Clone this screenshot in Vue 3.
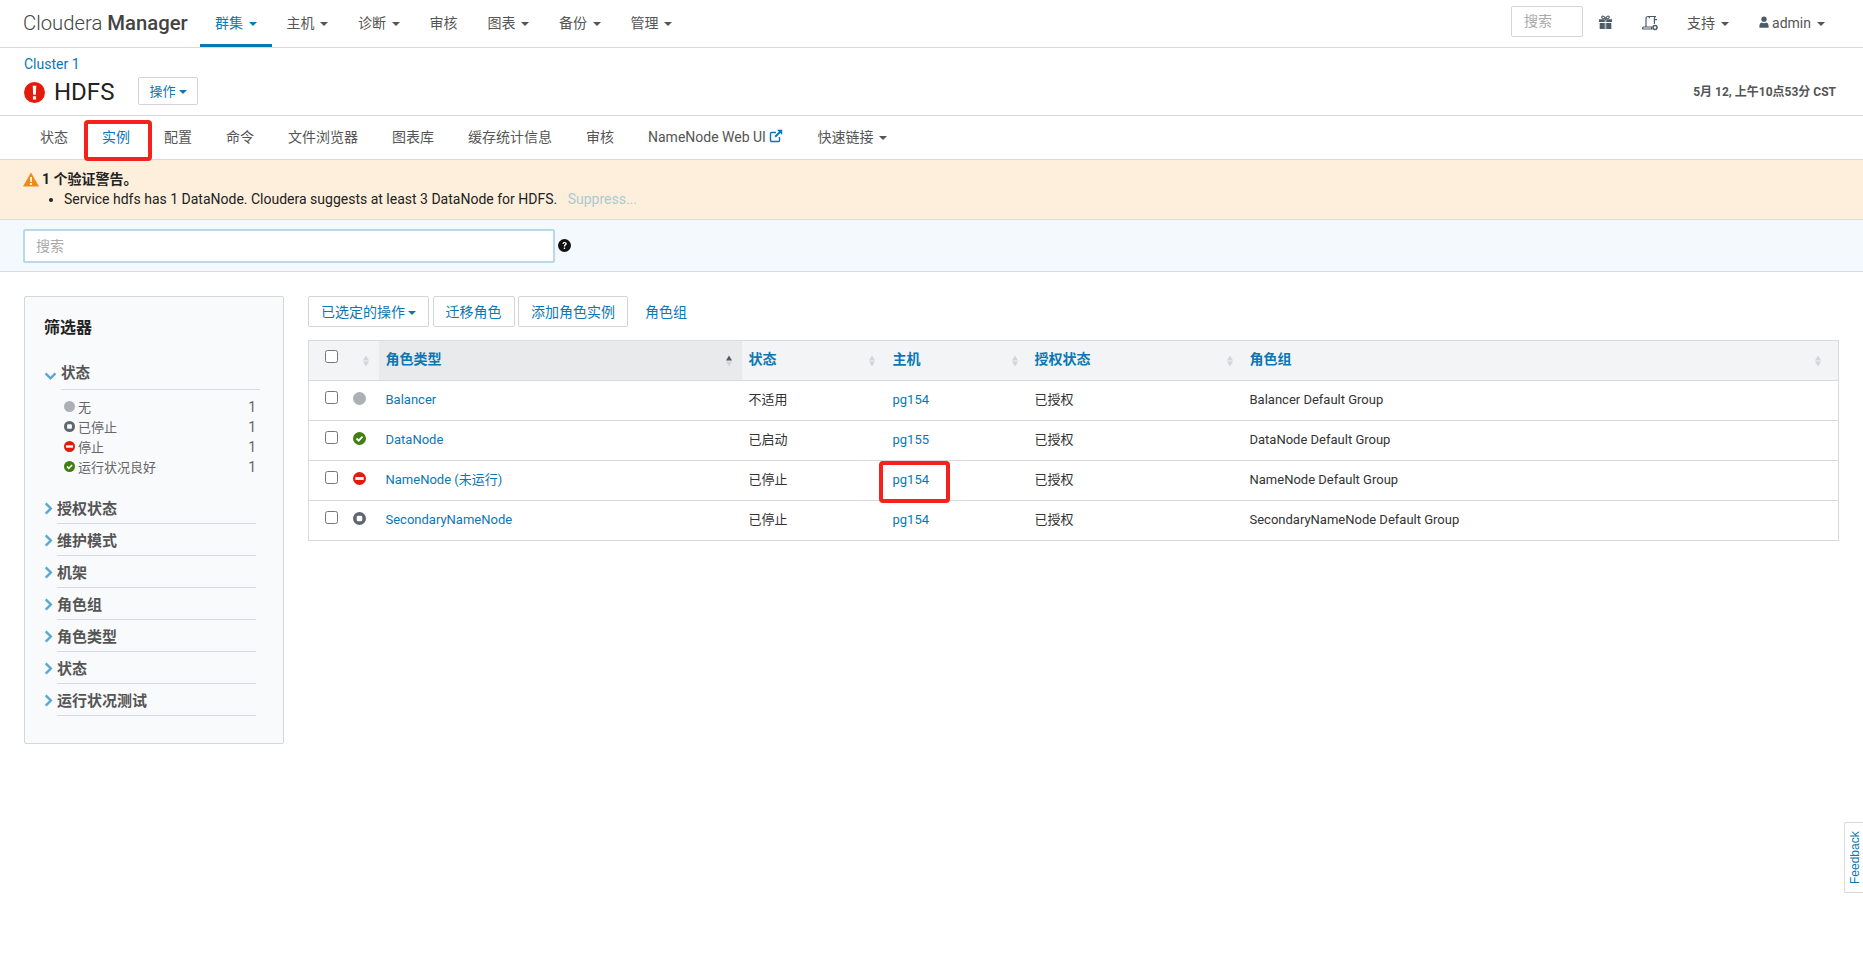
<script setup>
const navItems = [
  { label: '群集', caret: true, active: true },
  { label: '主机', caret: true },
  { label: '诊断', caret: true },
  { label: '审核' },
  { label: '图表', caret: true },
  { label: '备份', caret: true },
  { label: '管理', caret: true },
]

const tabs = ['状态', '实例', '配置', '命令', '文件浏览器', '图表库', '缓存统计信息', '审核']

const statusFilters = [
  { icon: 'none', label: '无', count: 1 },
  { icon: 'stopped', label: '已停止', count: 1 },
  { icon: 'bad', label: '停止', count: 1 },
  { icon: 'good', label: '运行状况良好', count: 1 },
]

const filterGroups = ['授权状态', '维护模式', '机架', '角色组', '角色类型', '状态', '运行状况测试']

const columns = [
  { key: 'check', label: '', sort: false },
  { key: 'icon', label: '', sort: true },
  { key: 'type', label: '角色类型', sort: true, sorted: true },
  { key: 'state', label: '状态', sort: true },
  { key: 'host', label: '主机', sort: true },
  { key: 'auth', label: '授权状态', sort: true },
  { key: 'group', label: '角色组', sort: true },
]

const rows = [
  { icon: 'none', type: 'Balancer', state: '不适用', host: 'pg154', auth: '已授权', group: 'Balancer Default Group' },
  { icon: 'good', type: 'DataNode', state: '已启动', host: 'pg155', auth: '已授权', group: 'DataNode Default Group' },
  { icon: 'bad', type: 'NameNode (未运行)', state: '已停止', host: 'pg154', auth: '已授权', group: 'NameNode Default Group', mark: true },
  { icon: 'stopped', type: 'SecondaryNameNode', state: '已停止', host: 'pg154', auth: '已授权', group: 'SecondaryNameNode Default Group' },
]
</script>

<template>
  <div class="page">
    <!-- top nav -->
    <header class="topbar">
      <div class="brand">Cloudera <b>Manager</b></div>
      <nav class="mainnav">
        <a v-for="item in navItems" :key="item.label" class="nav-item" :class="{ active: item.active }">
          {{ item.label }}<i v-if="item.caret" class="caret"></i>
        </a>
      </nav>
      <div class="top-right">
        <div class="top-search">搜索</div>
        <svg class="top-icon gift" viewBox="0 0 16 16" width="15" height="15">
          <path d="M1 4.500h14v3H1zM1.800 8.500h12.400V15H1.800z" fill="#4d5a68" />
          <path d="M7 4h2v11H7z" fill="#fff" opacity=".55" />
          <path d="M8 4C6 4 3.800 3.800 4 2.200 4.300.5 7 1 8 4c1-3 3.700-3.500 4-1.800C12.200 3.800 10 4 8 4z" fill="none" stroke="#4d5a68" stroke-width="1.300" />
        </svg>
        <svg class="top-icon scroll" viewBox="0 0 16 16" width="16" height="16">
          <path d="M4 12V3.200C4 2 5 1.500 6 1.500h8c-1 0-1.600.7-1.600 1.800v1.400H15M6 1.500c1 0 1.500.7 1.500 1.700M12.400 4.700V9M4 12H1.500c-.7 0-1 .7-.8 2h9c-.3-1.300 0-2 .8-2H4z" fill="none" stroke="#4d5a68" stroke-width="1.200" />
          <circle cx="13" cy="12.500" r="2" fill="none" stroke="#4d5a68" stroke-width="1.500" />
        </svg>
        <a class="nav-item plain">支持<i class="caret"></i></a>
        <a class="nav-item plain user">
          <svg viewBox="0 0 12 14" width="10" height="12"><circle cx="6" cy="3.600" r="3.200" fill="#4d5a68" /><path d="M.5 14c-.4-4 .8-6.500 2.800-6.500 1.500 1.200 3.900 1.200 5.400 0 2 0 3.200 2.500 2.800 6.500z" fill="#4d5a68" /></svg>
          admin<i class="caret"></i>
        </a>
      </div>
    </header>

    <!-- service title -->
    <section class="service-head">
      <a class="crumb">Cluster 1</a>
      <div class="title-row">
        <svg viewBox="0 0 20 20" width="21" height="21">
          <circle cx="10" cy="10" r="10" fill="#e21b0c" />
          <path d="M8.300 3.500h3.400l-.4 8.600H8.700zM8.500 13.600h3v3h-3z" fill="#fff" />
        </svg>
        <h1>HDFS</h1>
        <button class="btn actions">操作<i class="caret"></i></button>
        <span class="clock">5月 12, 上午10点53分 CST</span>
      </div>
    </section>

    <!-- tabs -->
    <nav class="tabs">
      <a v-for="(tab, i) in tabs" :key="tab + i" class="tab" :class="{ active: i === 1 }">
        {{ tab }}
        <span v-if="i === 1" class="mark mark-tab"></span>
      </a>
      <a class="tab">
        NameNode Web UI
        <svg class="ext" viewBox="0 0 14 14" width="14" height="14">
          <path d="M10.500 8v3.500a1 1 0 0 1-1 1h-7a1 1 0 0 1-1-1v-7a1 1 0 0 1 1-1H7" fill="none" stroke="#0a78b4" stroke-width="1.400" />
          <path d="M8 .8h5.200V6l-1.900-1.900-4.400 4.400-1.400-1.400 4.400-4.400z" fill="#0a78b4" />
        </svg>
      </a>
      <a class="tab">快速链接<i class="caret"></i></a>
    </nav>

    <!-- validation warning -->
    <section class="warning">
      <div class="warning-title">
        <svg viewBox="0 0 16 14" width="16" height="15">
          <path d="M8 0l8 14H0z" fill="#ef8a14" />
          <path d="M7 4.500h2l-.3 5H7.300zM7.100 10.500h1.800v2H7.100z" fill="#fff" />
        </svg>
        <b>1 个验证警告。</b>
      </div>
      <ul>
        <li>Service hdfs has 1 DataNode. Cloudera suggests at least 3 DataNode for HDFS. <a>Suppress...</a></li>
      </ul>
    </section>

    <!-- search band -->
    <section class="searchband">
      <div class="search-input">搜索</div>
      <svg class="help" viewBox="0 0 14 14" width="13" height="13">
        <circle cx="7" cy="7" r="7" fill="#111" />
        <path d="M4.700 5.200C4.900 3.800 5.900 3.200 7.100 3.200c1.300 0 2.300.8 2.300 2 0 1.700-1.700 1.700-1.700 3H6.200c0-2.100 1.600-2 1.600-3 0-.5-.3-.8-.8-.8-.5 0-.8.300-.9.900zM6.200 9.200h1.500v1.600H6.200z" fill="#fff" />
      </svg>
    </section>

    <main class="content">
      <!-- filters -->
      <aside class="filters">
        <h3>筛选器</h3>
        <div class="filter-open">
          <svg viewBox="0 0 14 10" width="13" height="9"><path d="M1.500 1.500L7 7l5.500-5.500" fill="none" stroke="#5ba8cf" stroke-width="2.600" /></svg>
          <span>状态</span>
        </div>
        <ul class="status-list">
          <li v-for="f in statusFilters" :key="f.label">
            <svg class="status-icon small" viewBox="0 0 14 14">
              <template v-if="f.icon === 'none'"><circle cx="7" cy="7" r="7" fill="#adb0b5" /></template>
              <template v-else-if="f.icon === 'stopped'"><circle cx="7" cy="7" r="7" fill="#5f6670" /><rect x="4" y="4" width="6" height="6" rx="1.500" fill="#fff" /></template>
              <template v-else-if="f.icon === 'bad'"><circle cx="7" cy="7" r="7" fill="#e21b0c" /><rect x="2.500" y="5.500" width="9" height="3" fill="#fff" /></template>
              <template v-else><circle cx="7" cy="7" r="7" fill="#3f8010" /><path d="M3.800 7l2.300 2.300 4.200-4.300" fill="none" stroke="#fff" stroke-width="2" /></template>
            </svg>
            <span class="status-label">{{ f.label }}</span>
            <span class="status-count">{{ f.count }}</span>
          </li>
        </ul>
        <div v-for="g in filterGroups" :key="g" class="filter-group">
          <svg viewBox="0 0 9 14" width="9" height="13"><path d="M1.500 1.500L7 7l-5.500 5.500" fill="none" stroke="#5ba8cf" stroke-width="2.600" /></svg>
          <span>{{ g }}</span>
        </div>
      </aside>

      <div class="main-col">
        <div class="toolbar">
          <button class="btn">已选定的操作<i class="caret"></i></button>
          <button class="btn">迁移角色</button>
          <button class="btn">添加角色实例</button>
          <a class="tool-link">角色组</a>
        </div>

        <table class="roles">
          <colgroup>
            <col />
            <col />
            <col />
            <col />
            <col />
            <col />
            <col />
          </colgroup>
          <thead>
            <tr>
              <th v-for="c in columns" :key="c.key" :class="{ sorted: c.sorted }">
                <input v-if="c.key === 'check'" type="checkbox" />
                {{ c.label }}
                <span v-if="c.sort" class="sort" :class="{ up: c.sorted }"><i></i><i></i></span>
              </th>
            </tr>
          </thead>
          <tbody>
            <tr v-for="row in rows" :key="row.type">
              <td><input type="checkbox" /></td>
              <td class="icon-cell">
                <svg class="status-icon" viewBox="0 0 14 14">
                  <template v-if="row.icon === 'none'"><circle cx="7" cy="7" r="7" fill="#adb0b5" /></template>
                  <template v-else-if="row.icon === 'stopped'"><circle cx="7" cy="7" r="7" fill="#5f6670" /><rect x="4" y="4" width="6" height="6" rx="1.500" fill="#fff" /></template>
                  <template v-else-if="row.icon === 'bad'"><circle cx="7" cy="7" r="7" fill="#e21b0c" /><rect x="2.500" y="5.500" width="9" height="3" fill="#fff" /></template>
                  <template v-else><circle cx="7" cy="7" r="7" fill="#3f8010" /><path d="M3.800 7l2.300 2.300 4.200-4.300" fill="none" stroke="#fff" stroke-width="2" /></template>
                </svg>
              </td>
              <td><a>{{ row.type }}</a></td>
              <td>{{ row.state }}</td>
              <td class="host-cell">
                <a>{{ row.host }}</a>
                <span v-if="row.mark" class="mark mark-host"></span>
              </td>
              <td>{{ row.auth }}</td>
              <td>{{ row.group }}</td>
            </tr>
          </tbody>
        </table>
      </div>
    </main>

    <a class="feedback">Feedback</a>
  </div>
</template>

<style>
html,
body {
  margin: 0;
  background: #fff;
}
</style>

<style scoped>
.page {
  min-height: 969px;
  font-family: Roboto, "Noto Sans CJK SC", sans-serif;
  font-size: 13px;
  color: #333;
  position: relative;
  overflow: hidden;
}

a {
  color: #0a78b4;
}

.caret {
  display: inline-block;
  width: 0;
  height: 0;
  margin-left: 5.5px;
  vertical-align: middle;
  border-top: 4px solid currentColor;
  border-left: 4px solid transparent;
  border-right: 4px solid transparent;
}

/* 顶部导航 */
.topbar {
  height: 47px;
  border-bottom: 1px solid #d9d9d9;
  display: flex;
  align-items: stretch;
  padding-left: 23px;
}

.brand {
  width: 177px;
  font-size: 20.300px;
  line-height: 46px;
  color: #444;
  font-weight: 300;
  white-space: nowrap;
}

.brand b {
  font-weight: 500;
}

.mainnav {
  display: flex;
}

.nav-item {
  padding: 0 15px;
  font-size: 14px;
  line-height: 46px;
  color: #555;
  white-space: nowrap;
}

.nav-item.active {
  color: #0a78b4;
  border-bottom: 3px solid #0a78b4;
  height: 44px;
  margin-bottom: -1px;
}

.top-right {
  margin-left: auto;
  display: flex;
  align-items: center;
  padding: 0 26.500px 2px 0;
}

.top-search {
  width: 72px;
  height: 31px;
  box-sizing: border-box;
  border: 1px solid #d5d5d5;
  border-radius: 2px;
  line-height: 29px;
  padding-left: 12px;
  margin-bottom: 2px;
  color: #aaa;
  font-size: 14px;
}

.top-icon {
  display: block;
}

.gift {
  margin-left: 15px;
}

.scroll {
  margin-left: 29px;
  margin-right: 14px;
}

.nav-item.user {
  padding-right: 12px;
}

/* 服务标题 */
.service-head {
  height: 68px;
  box-sizing: border-box;
  padding: 6px 23px 0 24px;
  border-bottom: 1px solid #d9d9d9;
}

.crumb {
  display: block;
  font-size: 14px;
  line-height: 20px;
}

.title-row {
  display: flex;
  align-items: center;
  height: 32px;
  margin-top: 2px;
}

h1 {
  margin: 0 0 0 9px;
  font-size: 24px;
  font-weight: 400;
  color: #222;
}

.btn {
  height: 31px;
  padding: 0 12px 2px;
  border: 1px solid #d5d5d5;
  border-radius: 2px;
  background: #fff;
  color: #0a78b4;
  font: inherit;
  font-size: 14px;
  white-space: nowrap;
}

.btn .caret {
  margin-left: 3px;
}

.actions {
  height: 28px;
  margin: 0 0 2px 24px;
  padding: 0 10px 2px;
  font-size: 13px;
}

.actions .caret {
  margin-left: 4px;
}

.clock {
  margin: 0 0 3px auto;
  padding-right: 4px;
  font-size: 12px;
  font-weight: 700;
  color: #555;
}

/* 标签页 */
.tabs {
  height: 43px;
  padding-left: 25px;
  display: flex;
  gap: 4px;
  border-bottom: 1px solid #d9d9d9;
}

.tab {
  position: relative;
  padding: 0 15px;
  font-size: 14px;
  line-height: 42px;
  color: #555;
  white-space: nowrap;
}

.tab.active {
  color: #0a78b4;
  border-bottom: 2px solid #0a78b4;
  height: 41px;
}

.ext {
  vertical-align: -1px;
}

/* 红色标注框 */
.mark {
  position: absolute;
  border: 4px solid #f5211c;
  border-radius: 4px;
  box-sizing: border-box;
}

.mark-tab {
  left: -3px;
  top: 4px;
  width: 68px;
  height: 41px;
}

.mark-host {
  left: -7px;
  top: 0;
  width: 71px;
  height: 42px;
}

/* 警告 */
.warning {
  height: 60px;
  box-sizing: border-box;
  background: #fdefdc;
  border-bottom: 1px solid #dcdcdc;
  padding: 9px 24px 0 23px;
  color: #222;
}

.warning-title {
  display: flex;
  align-items: center;
  gap: 3px;
  line-height: 20px;
  font-size: 14px;
}

.warning ul {
  margin: 0;
  padding: 0 0 0 41px;
  line-height: 21px;
  font-size: 14px;
}

.warning li a {
  color: #a9cbd3;
  margin-left: 7px;
}

/* 搜索 */
.searchband {
  height: 52px;
  box-sizing: border-box;
  background: #f4f9fd;
  border-bottom: 1px solid #dcdcdc;
  display: flex;
  align-items: center;
  gap: 3px;
  padding-left: 23px;
}

.search-input {
  width: 532px;
  height: 34px;
  box-sizing: border-box;
  background: #fff;
  border: 2px solid #b9d8ea;
  border-radius: 2px;
  line-height: 30px;
  padding-left: 11px;
  color: #aaa;
  font-size: 14px;
}

/* 内容区 */
.content {
  display: flex;
  padding: 24px 24px 0;
}

.filters {
  width: 260px;
  height: 448px;
  flex: none;
  box-sizing: border-box;
  background: #f9fafc;
  border: 1px solid #d5d6d8;
  border-radius: 2px;
  padding: 0 0 0 19px;
}

h3 {
  margin: 19px 0 0;
  font-size: 16px;
  line-height: 24px;
  font-weight: 700;
  color: #222;
}

.filter-open {
  display: flex;
  align-items: center;
  gap: 4px;
  margin-top: 22px;
  height: 28px;
  width: 216px;
  color: #555;
  font-weight: 700;
  font-size: 14.5px;
}

.filter-open span {
  flex: 1;
  height: 27px;
  line-height: 24px;
  border-bottom: 1px solid #d9d9de;
}

.status-list {
  list-style: none;
  margin: 6px 0 0 20px;
  padding: 0;
  width: 192px;
  height: 96px;
}

.status-list li {
  display: flex;
  align-items: center;
  height: 20px;
  color: #666;
  font-size: 13px;
}

.status-icon {
  width: 13px;
  height: 13px;
  display: block;
}

.status-icon.small {
  width: 11px;
  height: 11px;
  margin-right: 3px;
}

.status-count {
  margin: 2px 0 0 auto;
  font-size: 14px;
}

.filter-group {
  display: flex;
  align-items: center;
  gap: 4px;
  height: 32px;
  width: 212px;
  color: #555;
  font-weight: 700;
  font-size: 15px;
}

.filter-group span {
  flex: 1;
  align-self: flex-end;
  height: 27px;
  line-height: 27px;
  border-bottom: 1px solid #d9d9de;
}

.main-col {
  flex: 1;
  margin-left: 24px;
}

.toolbar {
  display: flex;
  align-items: center;
  gap: 3.500px;
  height: 31px;
}

.tool-link {
  margin: 0 0 2px 13.500px;
  font-size: 14px;
}

/* 表格 */
.roles {
  width: 100%;
  margin-top: 13px;
  table-layout: fixed;
  border-collapse: collapse;
  border: 1px solid #d9d9d9;
  font-size: 13px;
}

.roles col:nth-child(1) {
  width: 38px;
}

.roles col:nth-child(2) {
  width: 32px;
}

.roles col:nth-child(3) {
  width: 363px;
}

.roles col:nth-child(4) {
  width: 144px;
}

.roles col:nth-child(5) {
  width: 142px;
}

.roles col:nth-child(6) {
  width: 215px;
}

.roles th {
  position: relative;
  height: 40px;
  padding: 0 7px 4px;
  box-sizing: border-box;
  background: #f3f4f6;
  border-bottom: 1px solid #d9d9d9;
  text-align: left;
  color: #0a78b4;
  font-size: 14px;
  line-height: 20px;
  font-weight: 700;
}

.roles th.sorted {
  background: #e9eaec;
}

.roles td {
  height: 37px;
  padding: 0 7px 2px;
  border-bottom: 1px solid #d9d9d9;
  color: #333;
  font-size: 13px;
  line-height: 20px;
}

.roles input {
  width: 13px;
  height: 13px;
  margin: 0 0 4px 9px;
  display: block;
}

.icon-cell .status-icon {
  margin-left: -1px;
  margin-top: -2px;
}

.host-cell {
  position: relative;
}

.sort {
  position: absolute;
  right: 10px;
  top: 50%;
  transform: translateY(-50%);
  display: flex;
  flex-direction: column;
  gap: 1px;
}

th:nth-child(4) .sort {
  right: 11px;
}

th:last-child .sort {
  right: 17px;
}

.sort i {
  width: 0;
  height: 0;
  border-left: 3.500px solid transparent;
  border-right: 3.500px solid transparent;
}

.sort i:first-child {
  border-bottom: 5px solid #d2d4d8;
}

.sort i:last-child {
  border-top: 5px solid #d2d4d8;
}

.sort.up i:first-child {
  border-bottom-color: #4d5a68;
}

.feedback {
  position: absolute;
  right: 0;
  top: 822px;
  width: 15px;
  height: 69px;
  padding-right: 3px;
  border: 1px solid #d9d9d9;
  border-left: none;
  border-radius: 0 2px 2px 0;
  background: #fff;
  color: #0a78b4;
  font-family: "Liberation Sans", sans-serif;
  font-size: 12px;
  writing-mode: vertical-rl;
  rotate: 180deg;
  text-align: center;
  line-height: 15px;
}
</style>
